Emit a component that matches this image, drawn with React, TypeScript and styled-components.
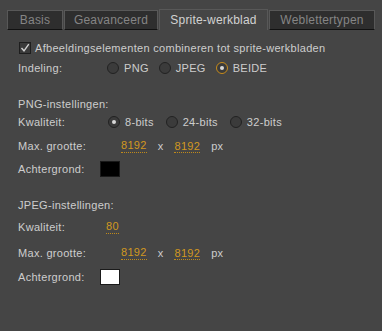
import React from 'react'
import styled, { createGlobalStyle } from 'styled-components'

const GlobalStyle = createGlobalStyle`
  html, body {
    margin: 0;
    padding: 0;
    background: #454545;
  }
  body {
    font-family: "Liberation Sans", Arial, sans-serif;
    font-size: 11px;
    letter-spacing: 0.3px;
  }
`

const Panel = styled.div`
  width: 382px;
  height: 331px;
  background: #454545;
  color: #cdcdcd;
  box-sizing: border-box;
  padding-top: 10px;
  overflow: hidden;
`

const TabBar = styled.div`
  display: flex;
  gap: 1px;
  padding-left: 7px;
  height: 20px;
  align-items: flex-end;
`

const Tab = styled.div<{ $w: number; $active?: boolean }>`
  width: ${p => p.$w}px;
  height: ${p => (p.$active ? 21 : 20)}px;
  box-sizing: border-box;
  display: flex;
  align-items: center;
  justify-content: center;
  font-size: 12px;
  letter-spacing: 0.2px;
  border: 1px solid #585858;
  border-bottom: ${p => (p.$active ? 'none' : '1px solid #111')};
  background: ${p => (p.$active ? '#454545' : '#2e2e2e')};
  color: ${p => (p.$active ? '#d2d2d2' : '#858585')};
  padding-bottom: 1px;
`

const Body = styled.div`
  display: flex;
  flex-direction: column;
  padding-left: 18px;
  padding-top: 9px;
`

const Row = styled.div<{ $mt?: number }>`
  display: flex;
  align-items: center;
  height: 18px;
  margin-top: ${p => p.$mt ?? 0}px;
`

const Label = styled.span<{ $w?: number }>`
  width: ${p => (p.$w ? `${p.$w}px` : 'auto')};
  flex-shrink: 0;
  white-space: nowrap;
`

const CheckBox = styled.span`
  width: 12px;
  height: 12px;
  box-sizing: border-box;
  border: 1px solid #1e1e1e;
  background: #3a3a3a;
  margin-left: 1px;
  margin-right: 4px;
  display: flex;
  align-items: center;
  justify-content: center;
`

const RadioGroup = styled.div<{ $gap: number }>`
  display: flex;
  align-items: center;
  gap: ${p => p.$gap}px;
`

const RadioItem = styled.label`
  display: flex;
  align-items: center;
  gap: 5px;
`

const RadioCircle = styled.span<{ $checked?: boolean; $focus?: boolean }>`
  width: 12px;
  height: 12px;
  box-sizing: border-box;
  border-radius: 50%;
  border: 1px solid ${p => (p.$focus ? '#c88c1a' : '#222')};
  background: #3b3b3b;
  display: flex;
  align-items: center;
  justify-content: center;
  &::after {
    content: '';
    display: ${p => (p.$checked ? 'block' : 'none')};
    width: 4px;
    height: 4px;
    border-radius: 50%;
    background: #d8d8d8;
  }
`

const Value = styled.span`
  color: #d1981f;
  border-bottom: 1px dotted #c08a1a;
  line-height: 13px;
`

const Unit = styled.span<{ $ml: number }>`
  margin-left: ${p => p.$ml}px;
`

const Swatch = styled.span<{ $color: string }>`
  width: 20px;
  height: 16px;
  box-sizing: border-box;
  border: 1px solid #1a1a1a;
  background: ${p => p.$color};
`

function Radio({ label, checked, focus }: { label: string; checked?: boolean; focus?: boolean }) {
  return (
    <RadioItem>
      <RadioCircle $checked={checked} $focus={focus} />
      {label}
    </RadioItem>
  )
}

function SizeRow({ mt }: { mt: number }) {
  return (
    <Row $mt={mt}>
      <Label $w={103}>Max. grootte:</Label>
      <Value>8192</Value>
      <Unit $ml={11}>x</Unit>
      <Unit $ml={11}>
        <Value>8192</Value>
      </Unit>
      <Unit $ml={11}>px</Unit>
    </Row>
  )
}

export default function App() {
  return (
    <Panel>
      <GlobalStyle />
      <TabBar>
        <Tab $w={56}>Basis</Tab>
        <Tab $w={94}>Geavanceerd</Tab>
        <Tab $w={109} $active>Sprite-werkblad</Tab>
        <Tab $w={106}>Weblettertypen</Tab>
      </TabBar>
      <Body>
        <Row>
          <CheckBox>
            <svg width="10" height="10" viewBox="0 0 10 10">
              <path d="M1.5 5 L4 7.8 L8.8 1.2" fill="none" stroke="#d0d0d0" strokeWidth="1.4" />
            </svg>
          </CheckBox>
          Afbeeldingselementen combineren tot sprite-werkbladen
        </Row>
        <Row $mt={2}>
          <Label $w={89}>Indeling:</Label>
          <RadioGroup $gap={10}>
            <Radio label="PNG" />
            <Radio label="JPEG" />
            <Radio label="BEIDE" checked focus />
          </RadioGroup>
        </Row>
        <Row $mt={18}>
          <Label>PNG-instellingen:</Label>
        </Row>
        <Row>
          <Label $w={90}>Kwaliteit:</Label>
          <RadioGroup $gap={12}>
            <Radio label="8-bits" checked />
            <Radio label="24-bits" />
            <Radio label="32-bits" />
          </RadioGroup>
        </Row>
        <SizeRow mt={6} />
        <Row $mt={5}>
          <Label $w={82}>Achtergrond:</Label>
          <Swatch $color="#000" />
        </Row>
        <Row $mt={18}>
          <Label>JPEG-instellingen:</Label>
        </Row>
        <Row $mt={4}>
          <Label $w={88}>Kwaliteit:</Label>
          <Value>80</Value>
        </Row>
        <SizeRow mt={8} />
        <Row $mt={6}>
          <Label $w={82}>Achtergrond:</Label>
          <Swatch $color="#fff" />
        </Row>
      </Body>
    </Panel>
  )
}
